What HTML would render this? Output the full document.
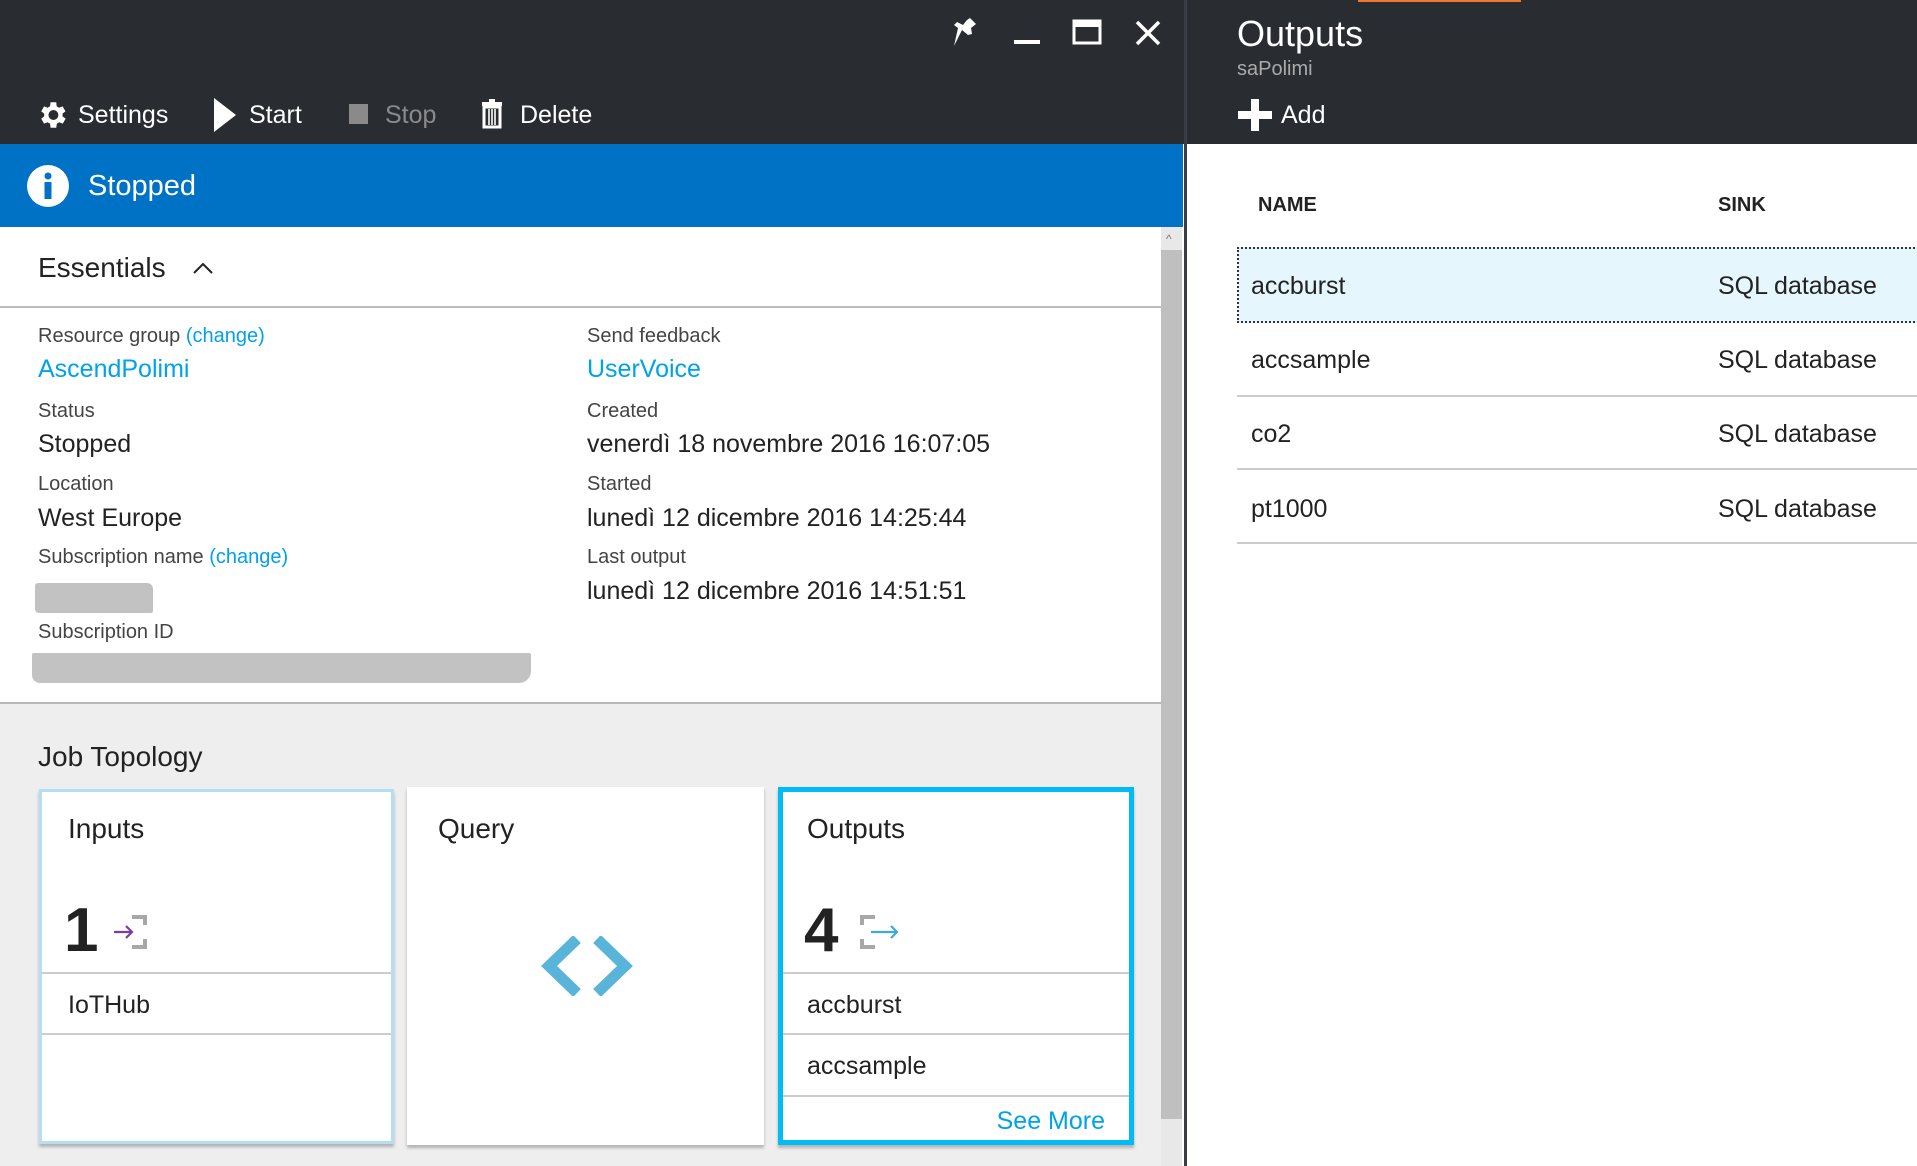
<!DOCTYPE html>
<html><head><meta charset="utf-8"><style>
*{margin:0;padding:0;box-sizing:border-box}
body{width:1917px;height:1166px;overflow:hidden;background:#fff;font-family:"Liberation Sans",sans-serif;position:relative;color:#2b2b2b}
.a{position:absolute;white-space:nowrap}
.lab{font-size:20px;color:#444;line-height:24px}
.val{font-size:25px;color:#222;line-height:30px}
.lnk{color:#00a2e8}
</style></head><body>
<div class="a" style="left:0;top:0;width:1184px;height:144px;background:#292d32"></div>
<div class="a" style="left:1184px;top:0;width:3px;height:1166px;background:#3a3e44"></div>
<svg class="a" style="left:948px;top:16px" width="222" height="34" viewBox="0 0 222 34">
 <path d="M22 2 L28 8 L23 12 L24 18 L20 19 L14 14 L6 30 L10 12 L6 9 L9 6 L15 9 L19 4Z" fill="#fff"/>
 <rect x="66" y="24" width="26" height="4" fill="#fff"/>
 <rect x="126" y="5" width="26" height="22" fill="none" stroke="#fff" stroke-width="3"/>
 <rect x="126" y="5" width="26" height="6" fill="#fff"/>
 <path d="M189 6 L211 28 M211 6 L189 28" stroke="#fff" stroke-width="3.5"/>
</svg>
<svg class="a" style="left:35px;top:98px" width="34" height="34" viewBox="0 0 24 24"><path fill="#fff" d="M19.4 13a7.5 7.5 0 0 0 0-2l2.1-1.6-2-3.5-2.5 1a7 7 0 0 0-1.7-1L15 3h-4l-.4 2.9a7 7 0 0 0-1.7 1l-2.5-1-2 3.5L6.5 11a7.5 7.5 0 0 0 0 2l-2.1 1.6 2 3.5 2.5-1a7 7 0 0 0 1.7 1L11 21h4l.4-2.9a7 7 0 0 0 1.7-1l2.5 1 2-3.5zM13 15.5a3.5 3.5 0 1 1 0-7 3.5 3.5 0 0 1 0 7z"/></svg>
<div class="a" style="left:78px;top:100px;font-size:25px;line-height:30px;color:#fff">Settings</div>
<svg class="a" style="left:212px;top:97px" width="26" height="36"><path d="M2 1 L24 18 L2 35Z" fill="#fff"/></svg>
<div class="a" style="left:249px;top:100px;font-size:25px;line-height:30px;color:#fff">Start</div>
<div class="a" style="left:349px;top:104px;width:19px;height:20px;background:#8a8a8a"></div>
<div class="a" style="left:385px;top:100px;font-size:25px;line-height:30px;color:#8a8a8a">Stop</div>
<svg class="a" style="left:481px;top:99px" width="22" height="30" viewBox="0 0 22 30"><rect x="8" y="0" width="6" height="3" fill="#fff"/><rect x="1" y="3" width="20" height="4" fill="#fff"/><path d="M3 8 H19 V28 H3Z" fill="none" stroke="#fff" stroke-width="3"/><path d="M8 10V26M11 10V26M14 10V26" stroke="#fff" stroke-width="1.6"/></svg>
<div class="a" style="left:520px;top:100px;font-size:25px;line-height:30px;color:#fff">Delete</div>
<div class="a" style="left:0;top:144px;width:1183px;height:83px;background:#0072c6"></div>
<svg class="a" style="left:26px;top:164px" width="44" height="44"><circle cx="22" cy="22" r="21" fill="#fff"/><circle cx="22" cy="12" r="3.5" fill="#0072c6"/><rect x="18.5" y="18" width="7" height="17" fill="#0072c6"/></svg>
<div class="a" style="left:88px;top:169px;font-size:29px;line-height:34px;color:#fff">Stopped</div>
<div class="a" style="left:38px;top:251px;font-size:28px;line-height:34px;color:#222">Essentials</div>
<svg class="a" style="left:192px;top:260px" width="22" height="16"><path d="M2 13 L11 4 L20 13" fill="none" stroke="#222" stroke-width="2"/></svg>
<div class="a" style="left:0;top:306px;width:1161px;height:2px;background:#bdbdbd"></div>
<div class="a" style="left:1161px;top:227px;width:21px;height:939px;background:#e8e8e8"></div>
<div class="a" style="left:1161px;top:250px;width:21px;height:869px;background:#bfbfbf"></div>
<div class="a" style="left:1166px;top:232px;font-size:12px;color:#777">^</div>
<div class="a lab" style="left:38px;top:324px">Resource group <span class="lnk">(change)</span></div>
<div class="a val lnk" style="left:38px;top:354px">AscendPolimi</div>
<div class="a lab" style="left:38px;top:399px">Status</div>
<div class="a val" style="left:38px;top:429px">Stopped</div>
<div class="a lab" style="left:38px;top:472px">Location</div>
<div class="a val" style="left:38px;top:503px">West Europe</div>
<div class="a lab" style="left:38px;top:545px">Subscription name <span class="lnk">(change)</span></div>
<div class="a" style="left:35px;top:583px;width:118px;height:30px;background:#c2c2c2;border-radius:3px 6px 2px 4px"></div>
<div class="a lab" style="left:38px;top:620px">Subscription ID</div>
<div class="a" style="left:32px;top:653px;width:499px;height:30px;background:#c2c2c2;border-radius:2px 2px 12px 8px"></div>
<div class="a lab" style="left:587px;top:324px">Send feedback</div>
<div class="a val lnk" style="left:587px;top:354px">UserVoice</div>
<div class="a lab" style="left:587px;top:399px">Created</div>
<div class="a val" style="left:587px;top:429px">venerdì 18 novembre 2016 16:07:05</div>
<div class="a lab" style="left:587px;top:472px">Started</div>
<div class="a val" style="left:587px;top:503px">lunedì 12 dicembre 2016 14:25:44</div>
<div class="a lab" style="left:587px;top:545px">Last output</div>
<div class="a val" style="left:587px;top:576px">lunedì 12 dicembre 2016 14:51:51</div>
<div class="a" style="left:0;top:702px;width:1161px;height:464px;background:#eeeeee;border-top:2px solid #b8b8b8"></div>
<div class="a" style="left:38px;top:740px;font-size:28px;line-height:34px;color:#222">Job Topology</div>
<div class="a" style="left:39px;top:789px;width:355px;height:355px;background:#fff;border:3px solid #b3def5;box-shadow:0 3px 3px rgba(0,0,0,.25)"></div>
<div class="a" style="left:68px;top:812px;font-size:28px;line-height:34px;color:#222">Inputs</div>
<div class="a" style="left:64px;top:898px;font-size:62px;line-height:66px;color:#222;font-weight:bold">1</div>
<svg class="a" style="left:112px;top:914px" width="36" height="36"><path d="M20 3 H33 V11 M33 25 V33 H20" fill="none" stroke="#a7a7a7" stroke-width="4"/><path d="M2 18 H20 M14 12 L20 18 L14 24" fill="none" stroke="#7a3e9d" stroke-width="2.2"/></svg>
<div class="a" style="left:42px;top:972px;width:349px;height:2px;background:#ccc"></div>
<div class="a" style="left:68px;top:990px;font-size:25px;line-height:30px;color:#222">IoTHub</div>
<div class="a" style="left:42px;top:1033px;width:349px;height:2px;background:#ccc"></div>
<div class="a" style="left:407px;top:787px;width:357px;height:358px;background:#fff;box-shadow:0 3px 3px rgba(0,0,0,.25)"></div>
<div class="a" style="left:438px;top:812px;font-size:28px;line-height:34px;color:#222">Query</div>
<svg class="a" style="left:535px;top:936px" width="105" height="60"><path d="M42 3 L14 30 L42 57 M62 3 L90 30 L62 57" fill="none" stroke="#59b4d9" stroke-width="11"/></svg>
<div class="a" style="left:778px;top:787px;width:356px;height:358px;background:#fff;border:5px solid #00bcf2;box-shadow:0 3px 3px rgba(0,0,0,.25)"></div>
<div class="a" style="left:807px;top:812px;font-size:28px;line-height:34px;color:#222">Outputs</div>
<div class="a" style="left:804px;top:898px;font-size:62px;line-height:66px;color:#222;font-weight:bold">4</div>
<svg class="a" style="left:859px;top:914px" width="42" height="36"><path d="M16 3 H3 V11 M3 25 V33 H16" fill="none" stroke="#a7a7a7" stroke-width="4"/><path d="M12 18 H38 M32 12 L38 18 L32 24" fill="none" stroke="#3fa9dc" stroke-width="2.2"/></svg>
<div class="a" style="left:783px;top:972px;width:346px;height:2px;background:#ccc"></div>
<div class="a" style="left:807px;top:990px;font-size:25px;line-height:30px;color:#222">accburst</div>
<div class="a" style="left:783px;top:1033px;width:346px;height:2px;background:#ccc"></div>
<div class="a" style="left:807px;top:1051px;font-size:25px;line-height:30px;color:#222">accsample</div>
<div class="a" style="left:783px;top:1095px;width:346px;height:2px;background:#ccc"></div>
<div class="a" style="left:940px;top:1106px;width:165px;text-align:right;font-size:25px;line-height:30px;color:#00a2e8">See More</div>
<div class="a" style="left:1187px;top:0;width:730px;height:144px;background:#292d32"></div>
<div class="a" style="left:1358px;top:0;width:163px;height:2px;background:#f0782d"></div>
<div class="a" style="left:1237px;top:13px;font-size:36px;line-height:42px;color:#fff">Outputs</div>
<div class="a" style="left:1237px;top:57px;font-size:20px;line-height:24px;color:#aaa">saPolimi</div>
<svg class="a" style="left:1238px;top:99px" width="34" height="32"><rect x="13" y="0" width="8" height="32" fill="#fff"/><rect x="0" y="12" width="34" height="8" fill="#fff"/></svg>
<div class="a" style="left:1281px;top:100px;font-size:25px;line-height:30px;color:#fff">Add</div>
<div class="a" style="left:1258px;top:193px;font-size:20px;line-height:24px;color:#222;font-weight:bold">NAME</div>
<div class="a" style="left:1718px;top:193px;font-size:20px;line-height:24px;color:#222;font-weight:bold">SINK</div>
<div class="a" style="left:1237px;top:247px;width:690px;height:76px;background:#e5f6fd;border:2px dotted #333"></div>
<div class="a" style="left:1251px;top:271px;font-size:25px;line-height:30px;color:#222">accburst</div>
<div class="a" style="left:1718px;top:271px;font-size:25px;line-height:30px;color:#222">SQL database</div>
<div class="a" style="left:1251px;top:345px;font-size:25px;line-height:30px;color:#222">accsample</div>
<div class="a" style="left:1718px;top:345px;font-size:25px;line-height:30px;color:#222">SQL database</div>
<div class="a" style="left:1237px;top:395px;width:680px;height:2px;background:#ccc"></div>
<div class="a" style="left:1251px;top:419px;font-size:25px;line-height:30px;color:#222">co2</div>
<div class="a" style="left:1718px;top:419px;font-size:25px;line-height:30px;color:#222">SQL database</div>
<div class="a" style="left:1237px;top:468px;width:680px;height:2px;background:#ccc"></div>
<div class="a" style="left:1251px;top:494px;font-size:25px;line-height:30px;color:#222">pt1000</div>
<div class="a" style="left:1718px;top:494px;font-size:25px;line-height:30px;color:#222">SQL database</div>
<div class="a" style="left:1237px;top:542px;width:680px;height:2px;background:#ccc"></div>
</body></html>
